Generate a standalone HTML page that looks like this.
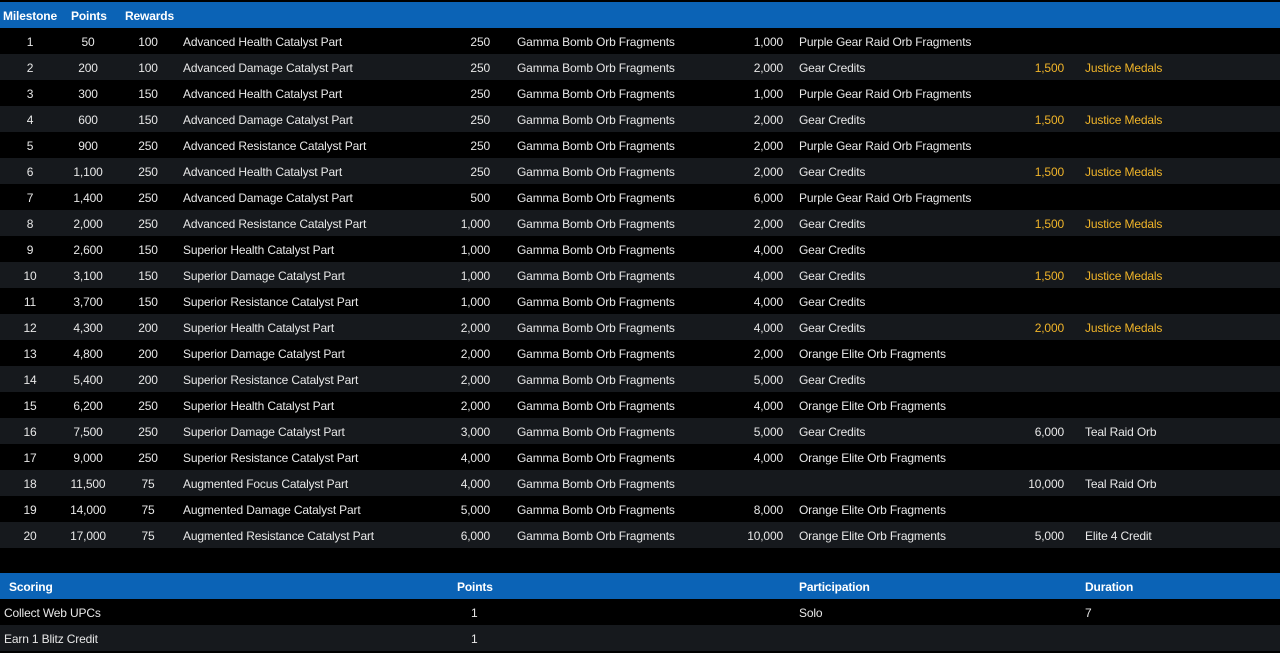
<!DOCTYPE html>
<html><head><style>
body{margin:0;background:#000;width:1280px;height:652px;overflow:hidden;font-family:"Liberation Sans",Arial,sans-serif;font-size:12px;letter-spacing:-0.15px;color:#e8e8e8}
.r{position:absolute;left:0;width:1280px;height:26px;line-height:28px}
.h{background:#0b63b6;color:#fff;font-weight:bold}
.a{background:#000}.b{background:#16191d}
.r span{position:absolute;white-space:nowrap}
.c{text-align:center}.rt{text-align:right}
.y{color:#f0b429}
</style></head><body>
<div id="t"></div>
<script>
const d=[[1,"50",100,"Advanced Health Catalyst Part","250","1,000","Purple Gear Raid Orb Fragments","",""],
[2,"200",100,"Advanced Damage Catalyst Part","250","2,000","Gear Credits","1,500","Justice Medals"],
[3,"300",150,"Advanced Health Catalyst Part","250","1,000","Purple Gear Raid Orb Fragments","",""],
[4,"600",150,"Advanced Damage Catalyst Part","250","2,000","Gear Credits","1,500","Justice Medals"],
[5,"900",250,"Advanced Resistance Catalyst Part","250","2,000","Purple Gear Raid Orb Fragments","",""],
[6,"1,100",250,"Advanced Health Catalyst Part","250","2,000","Gear Credits","1,500","Justice Medals"],
[7,"1,400",250,"Advanced Damage Catalyst Part","500","6,000","Purple Gear Raid Orb Fragments","",""],
[8,"2,000",250,"Advanced Resistance Catalyst Part","1,000","2,000","Gear Credits","1,500","Justice Medals"],
[9,"2,600",150,"Superior Health Catalyst Part","1,000","4,000","Gear Credits","",""],
[10,"3,100",150,"Superior Damage Catalyst Part","1,000","4,000","Gear Credits","1,500","Justice Medals"],
[11,"3,700",150,"Superior Resistance Catalyst Part","1,000","4,000","Gear Credits","",""],
[12,"4,300",200,"Superior Health Catalyst Part","2,000","4,000","Gear Credits","2,000","Justice Medals"],
[13,"4,800",200,"Superior Damage Catalyst Part","2,000","2,000","Orange Elite Orb Fragments","",""],
[14,"5,400",200,"Superior Resistance Catalyst Part","2,000","5,000","Gear Credits","",""],
[15,"6,200",250,"Superior Health Catalyst Part","2,000","4,000","Orange Elite Orb Fragments","",""],
[16,"7,500",250,"Superior Damage Catalyst Part","3,000","5,000","Gear Credits","6,000","Teal Raid Orb","w"],
[17,"9,000",250,"Superior Resistance Catalyst Part","4,000","4,000","Orange Elite Orb Fragments","",""],
[18,"11,500",75,"Augmented Focus Catalyst Part","4,000","","","10,000","Teal Raid Orb","w"],
[19,"14,000",75,"Augmented Damage Catalyst Part","5,000","8,000","Orange Elite Orb Fragments","",""],
[20,"17,000",75,"Augmented Resistance Catalyst Part","6,000","10,000","Orange Elite Orb Fragments","5,000","Elite 4 Credit","w"]];
let h='<div class="r h" style="top:2px"><span style="left:3px">Milestone</span><span style="left:71px">Points</span><span style="left:125px">Rewards</span></div>';
d.forEach((r,i)=>{const y=r[9]?'':' y';
h+=`<div class="r ${i%2?'b':'a'}" style="top:${28+i*26}px"><span class="c" style="left:10px;width:40px">${r[0]}</span><span class="c" style="left:58px;width:60px">${r[1]}</span><span class="c" style="left:118px;width:60px">${r[2]}</span><span style="left:183px">${r[3]}</span><span class="rt" style="right:790px">${r[4]}</span><span style="left:517px">Gamma Bomb Orb Fragments</span><span class="rt" style="right:497px">${r[5]}</span><span style="left:799px">${r[6]}</span><span class="rt${y}" style="right:216px">${r[7]}</span><span class="${y}" style="left:1085px">${r[8]}</span></div>`;});
h+='<div class="r h" style="top:573px"><span style="left:9px">Scoring</span><span style="left:457px">Points</span><span style="left:799px">Participation</span><span style="left:1085px">Duration</span></div>';
h+='<div class="r a" style="top:599px"><span style="left:4px">Collect Web UPCs</span><span style="left:471px">1</span><span style="left:799px">Solo</span><span style="left:1085px">7</span></div>';
h+='<div class="r b" style="top:625px"><span style="left:4px">Earn 1 Blitz Credit</span><span style="left:471px">1</span></div>';
document.getElementById('t').innerHTML=h;
</script>
</body></html>
